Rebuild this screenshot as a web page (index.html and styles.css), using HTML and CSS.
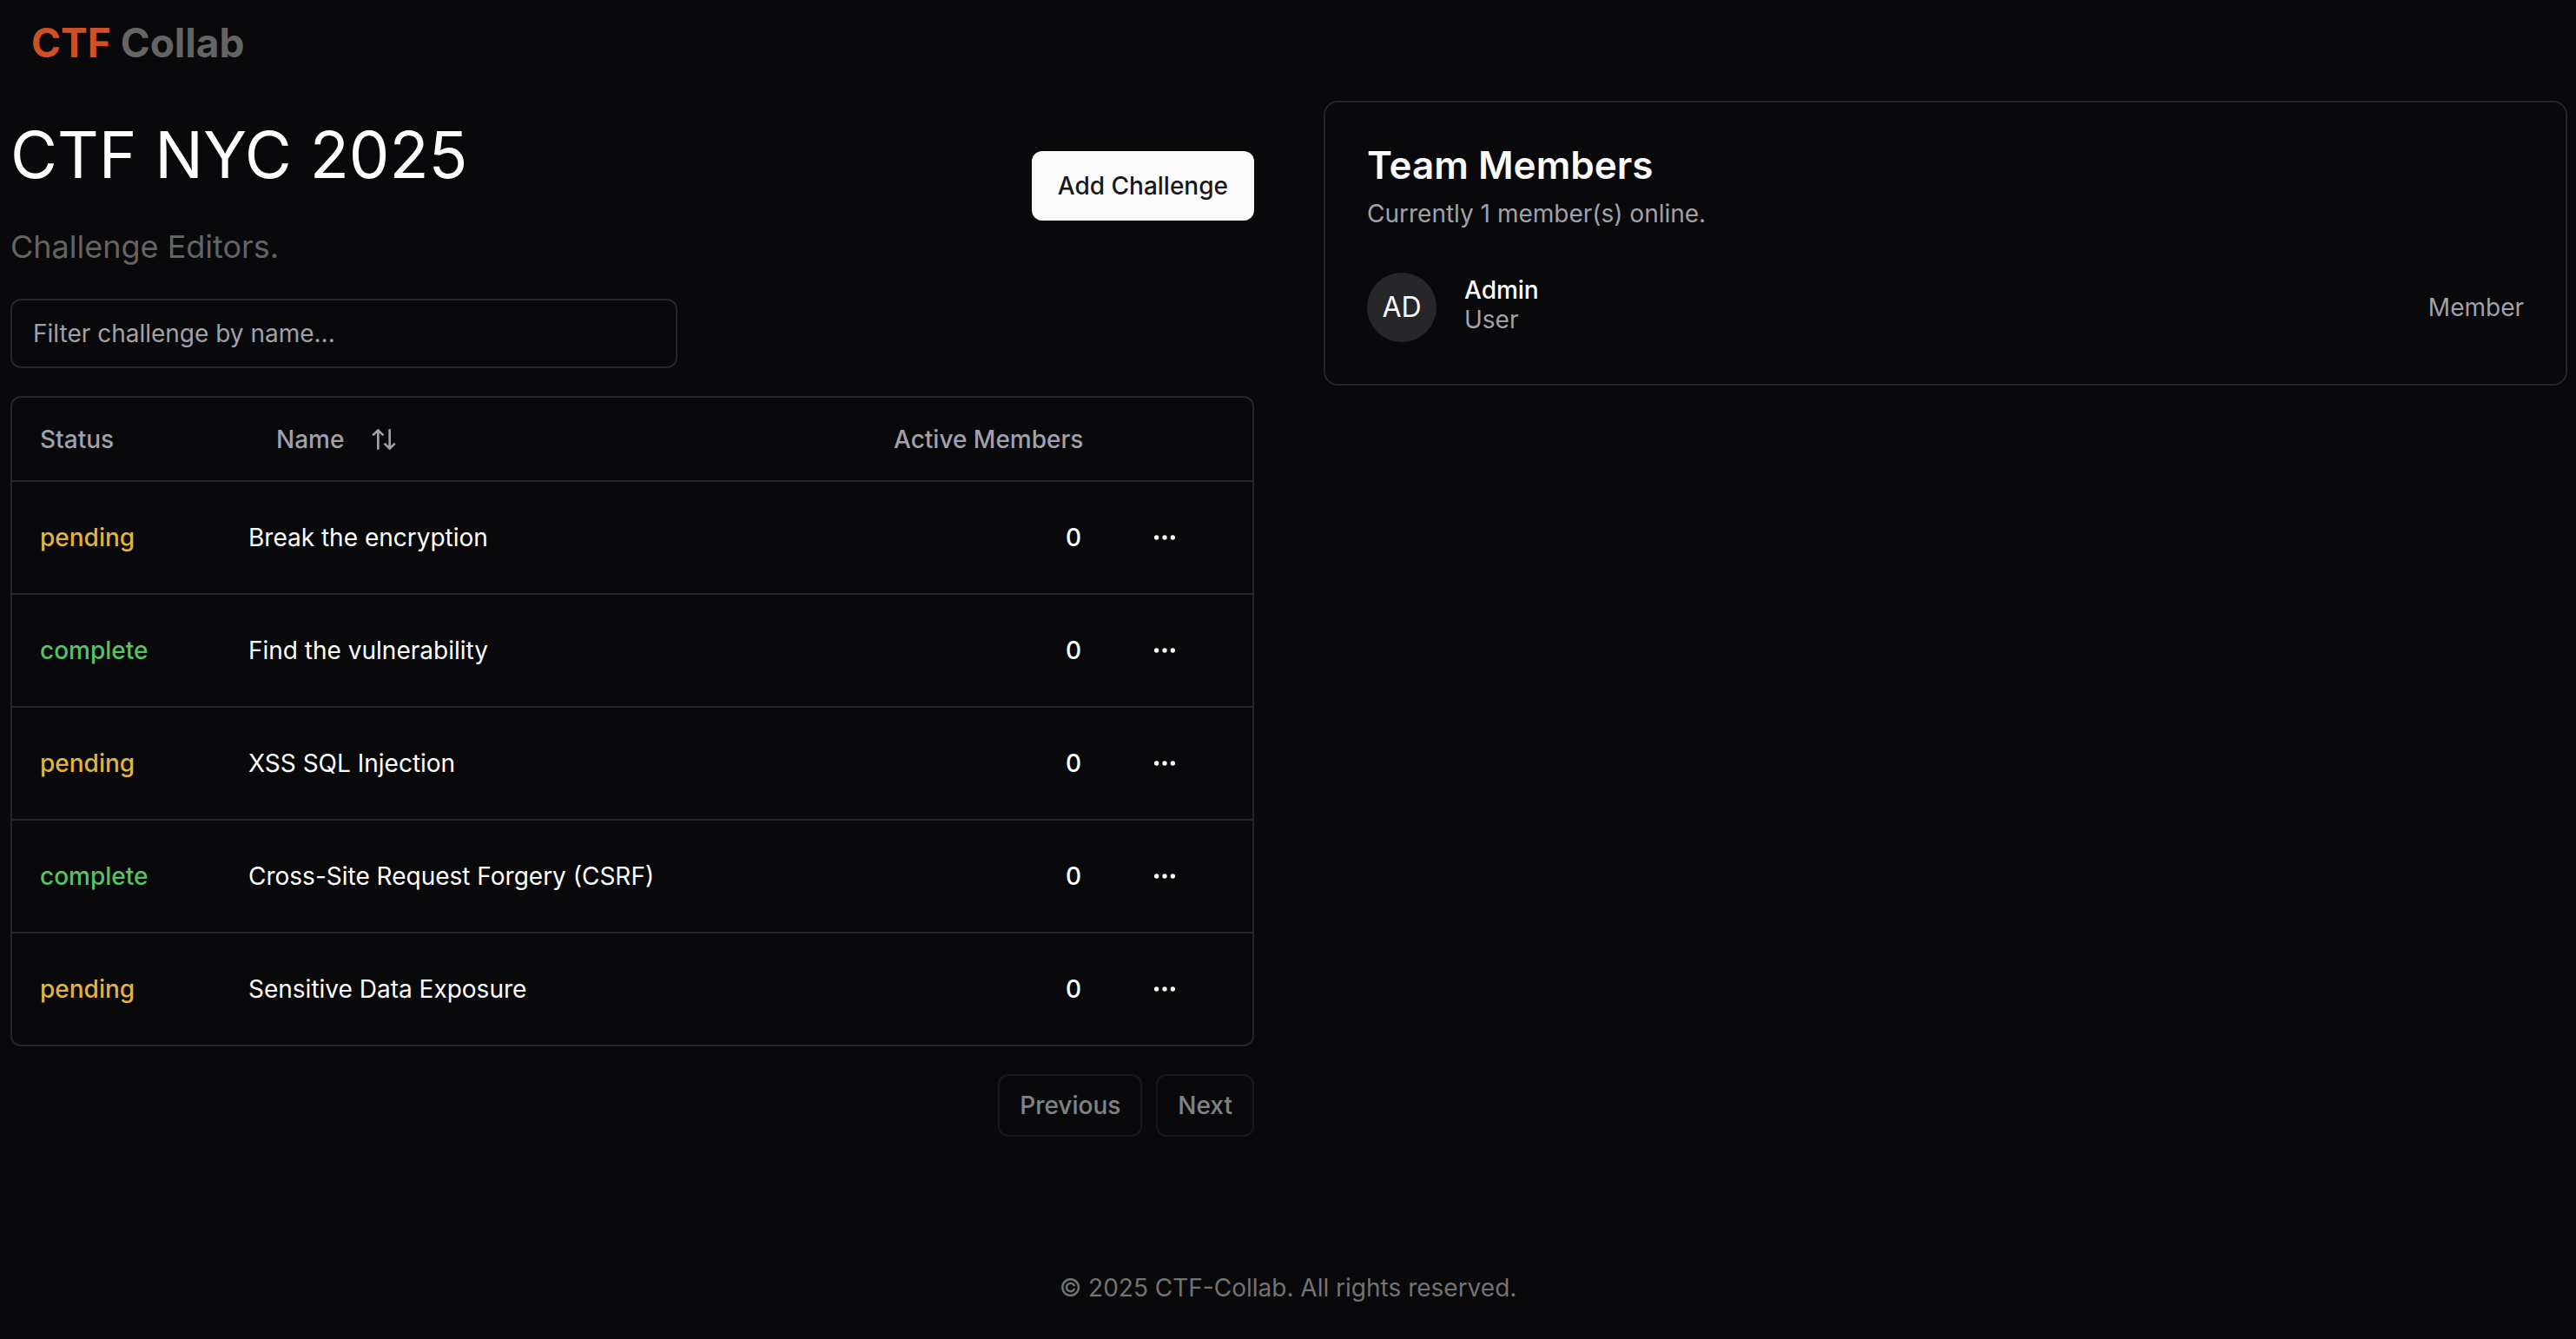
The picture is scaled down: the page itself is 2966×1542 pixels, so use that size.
FILE: index.html
```html
<!DOCTYPE html>
<html lang="en">
<head>
<meta charset="utf-8">
<meta name="viewport" content="width=device-width, initial-scale=1">
<title>CTF Collab</title>
<link rel="stylesheet" href="styles.css">
</head>
<body>
<header class="site-header">
  <a class="brand" href="#"><span class="brand-accent">CTF</span> Collab</a>
</header>

<main class="layout">
  <section class="challenges">
    <div class="intro">
      <div class="intro-text">
        <h1 class="title">CTF NYC 2025</h1>
        <p class="subtitle">Challenge Editors.</p>
      </div>
      <button class="button button-primary" type="button">Add Challenge</button>
    </div>

    <input class="filter" type="text" placeholder="Filter challenge by name..." aria-label="Filter challenge by name">

    <div class="table-frame">
      <table class="table">
        <colgroup>
          <col class="col-status">
          <col class="col-name">
          <col class="col-members">
          <col class="col-actions">
        </colgroup>
        <thead>
          <tr>
            <th scope="col">Status</th>
            <th scope="col">
              <button class="sort" type="button">Name
                <svg class="icon" viewBox="0 0 24 24" aria-hidden="true"><path d="m21 16-4 4-4-4M17 20V4M3 8l4-4 4 4M7 4v16"/></svg>
              </button>
            </th>
            <th scope="col" class="number">Active Members</th>
            <th scope="col" aria-label="Actions"></th>
          </tr>
        </thead>
        <tbody>
          <tr>
            <td class="status pending">pending</td>
            <td>Break the encryption</td>
            <td class="number">0</td>
            <td><button class="more" type="button" aria-label="Open menu"><svg class="icon" viewBox="0 0 24 24" aria-hidden="true"><circle cx="5" cy="12" r="1"/><circle cx="12" cy="12" r="1"/><circle cx="19" cy="12" r="1"/></svg></button></td>
          </tr>
          <tr>
            <td class="status complete">complete</td>
            <td>Find the vulnerability</td>
            <td class="number">0</td>
            <td><button class="more" type="button" aria-label="Open menu"><svg class="icon" viewBox="0 0 24 24" aria-hidden="true"><circle cx="5" cy="12" r="1"/><circle cx="12" cy="12" r="1"/><circle cx="19" cy="12" r="1"/></svg></button></td>
          </tr>
          <tr>
            <td class="status pending">pending</td>
            <td>XSS SQL Injection</td>
            <td class="number">0</td>
            <td><button class="more" type="button" aria-label="Open menu"><svg class="icon" viewBox="0 0 24 24" aria-hidden="true"><circle cx="5" cy="12" r="1"/><circle cx="12" cy="12" r="1"/><circle cx="19" cy="12" r="1"/></svg></button></td>
          </tr>
          <tr>
            <td class="status complete">complete</td>
            <td>Cross-Site Request Forgery (CSRF)</td>
            <td class="number">0</td>
            <td><button class="more" type="button" aria-label="Open menu"><svg class="icon" viewBox="0 0 24 24" aria-hidden="true"><circle cx="5" cy="12" r="1"/><circle cx="12" cy="12" r="1"/><circle cx="19" cy="12" r="1"/></svg></button></td>
          </tr>
          <tr>
            <td class="status pending">pending</td>
            <td>Sensitive Data Exposure</td>
            <td class="number">0</td>
            <td><button class="more" type="button" aria-label="Open menu"><svg class="icon" viewBox="0 0 24 24" aria-hidden="true"><circle cx="5" cy="12" r="1"/><circle cx="12" cy="12" r="1"/><circle cx="19" cy="12" r="1"/></svg></button></td>
          </tr>
        </tbody>
      </table>
    </div>

    <nav class="pager" aria-label="Pagination">
      <button class="button button-outline" type="button" disabled>Previous</button>
      <button class="button button-outline" type="button" disabled>Next</button>
    </nav>
  </section>

  <aside class="card">
    <h2 class="card-title">Team Members</h2>
    <p class="card-text">Currently 1 member(s) online.</p>
    <div class="member">
      <span class="avatar">AD</span>
      <div class="member-info">
        <p class="member-name">Admin</p>
        <p class="member-kind">User</p>
      </div>
      <span class="member-role">Member</span>
    </div>
  </aside>
</main>

<footer class="site-footer">© 2025 CTF-Collab. All rights reserved.</footer>
</body>
</html>
```
FILE: styles.css
```css
:root {
  --background: #09090b;
  --foreground: #fafafa;
  --muted: #a1a1aa;
  --border: #27272a;
}

*,
*::before,
*::after {
  box-sizing: border-box;
}

body {
  margin: 0;
  min-height: 100vh;
  background: var(--background);
  color: var(--foreground);
  font-family: Inter, "Liberation Sans", sans-serif;
  font-size: 28px;
  line-height: 40px;
}

h1,
h2,
p {
  margin: 0;
}

button,
input {
  font: inherit;
  color: inherit;
}

.site-header {
  padding: 17px 36px 35px;
}

.brand {
  display: block;
  color: #646464;
  font-size: 46px;
  font-weight: 700;
  line-height: 64px;
  text-decoration: none;
}

.brand-accent {
  color: #cf5024;
}

.layout {
  display: grid;
  grid-template-columns: 1fr 1fr;
  align-items: start;
  gap: 80px;
  padding: 0 10px 0 12px;
}

.challenges {
  display: flex;
  flex-direction: column;
  gap: 32px;
}

.intro {
  display: flex;
  align-items: center;
  justify-content: space-between;
}

.title {
  margin-bottom: 16px;
  color: #fff;
  font-size: 74px;
  font-weight: 400;
  line-height: 124px;
}

.subtitle {
  color: #646464;
  font-size: 36px;
  line-height: 56px;
}

.button {
  padding: 0 30px;
  border: 0;
  border-radius: 12px;
  font-weight: 500;
}

.button-primary {
  height: 80px;
  background: var(--foreground);
  color: #18181b;
}

.button-outline {
  height: 72px;
  padding: 0 23px;
  border: 2px solid var(--border);
  background: transparent;
  opacity: 0.5;
}

.filter {
  width: 100%;
  max-width: 768px;
  height: 80px;
  padding: 0 24px;
  border: 2px solid var(--border);
  border-radius: 12px;
  background: transparent;
}

.filter::placeholder {
  color: var(--muted);
  opacity: 1;
}

.table-frame {
  border: 2px solid var(--border);
  border-radius: 12px;
}

.table {
  width: 100%;
  border-collapse: collapse;
  table-layout: fixed;
}

.col-status {
  width: 240px;
}

.col-members {
  width: 280px;
}

.col-actions {
  width: 165px;
}

.table th {
  height: 96px;
  padding: 0 32px;
  color: var(--muted);
  font-weight: 500;
  text-align: left;
}

.table td {
  padding: 32px;
  color: #fff;
}

.table tr {
  border-bottom: 2px solid var(--border);
}

.table tbody tr:last-child {
  border-bottom: 0;
}

.table .number {
  font-weight: 500;
  text-align: right;
  white-space: nowrap;
}

.table .status {
  font-weight: 500;
}

.table .pending {
  color: #e3b341;
}

.table .complete {
  color: #56c364;
}

.sort {
  display: flex;
  align-items: center;
  gap: 30px;
  height: 80px;
  padding: 0 32px;
  border: 0;
  background: transparent;
}

.more {
  display: flex;
  align-items: center;
  justify-content: center;
  width: 64px;
  height: 64px;
  padding: 0;
  border: 0;
  background: transparent;
}

.icon {
  width: 32px;
  height: 32px;
  fill: none;
  stroke: currentColor;
  stroke-width: 2;
  stroke-linecap: round;
  stroke-linejoin: round;
}

.pager {
  display: flex;
  justify-content: flex-end;
  gap: 16px;
}

.card {
  padding: 48px;
  border: 2px solid var(--border);
  border-radius: 16px;
}

.card-title {
  margin-bottom: 12px;
  font-size: 44px;
  font-weight: 600;
  line-height: 48px;
}

.card-text {
  margin-bottom: 48px;
  color: var(--muted);
}

.member {
  display: flex;
  align-items: center;
  gap: 32px;
}

.avatar {
  display: flex;
  align-items: center;
  justify-content: center;
  width: 80px;
  height: 80px;
  border-radius: 50%;
  background: var(--border);
  font-size: 32px;
}

.member-info {
  flex: 1;
}

.member-name {
  font-weight: 500;
  line-height: 28px;
}

.member-kind,
.member-role {
  color: var(--muted);
}

.site-footer {
  padding: 154px 32px 38px;
  color: #737373;
  text-align: center;
}
```
